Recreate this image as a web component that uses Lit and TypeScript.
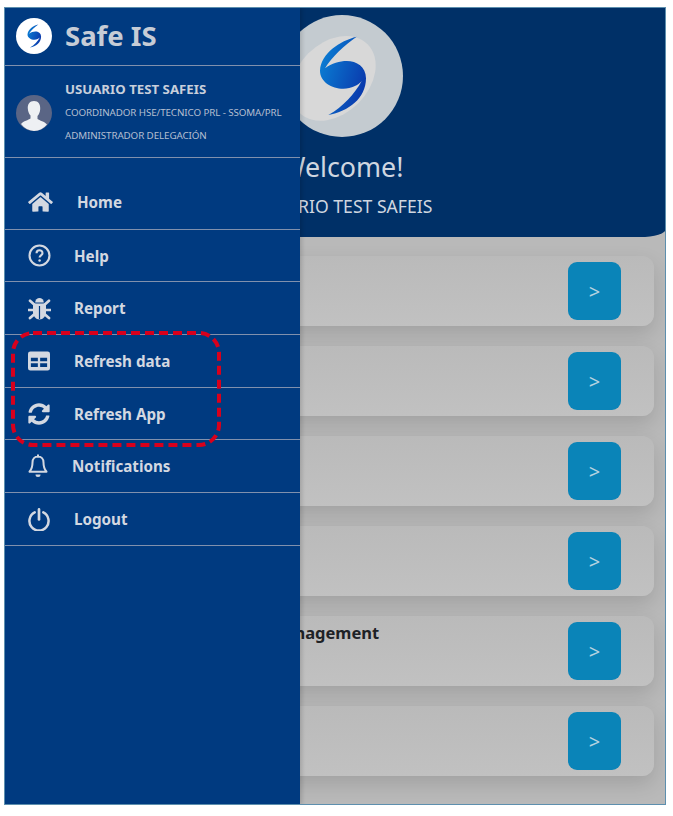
import { LitElement, html, css, svg } from "lit";
import { customElement } from "lit/decorators.js";

const S_PATH = "M200 110 C150 122 92 160 90 212 C90 245 125 266 160 266 C185 266 205 255 215 243 C195 280 160 320 115 345 C175 335 228 295 228 235 C228 200 200 183 170 183 C150 183 125 190 105 205 C125 170 165 135 200 110 Z";

const logo = (id: string, ring: string, inner: string) => html`<svg class="logo-svg" viewBox="-27 45 366 366">
  <defs><linearGradient id=${id} x1="0" y1="0" x2="1" y2="0.5"><stop offset="0" stop-color="#0a86d8"/><stop offset="1" stop-color="#0a3cae"/></linearGradient></defs>
  <circle cx="156" cy="228" r="183" fill=${ring}/>
  <ellipse cx="130" cy="235" rx="145" ry="106" fill=${inner} transform="rotate(-45 130 235)"/>
  <path d=${S_PATH} fill="url(#${id})"/>
</svg>`;

const icons: Record<string, unknown> = {
  home: svg`<svg class="ic" style="width:25px;height:22px" viewBox="0 0 576 512"><path d="M280.37 148.26L96 300.11V464a16 16 0 0 0 16 16l112.06-.29a16 16 0 0 0 15.92-16V368a16 16 0 0 1 16-16h64a16 16 0 0 1 16 16v95.64a16 16 0 0 0 16 16.05L464 480a16 16 0 0 0 16-16V300L295.67 148.26a12.19 12.19 0 0 0-15.3 0zM571.6 251.47L488 182.56V44.05a12 12 0 0 0-12-12h-56a12 12 0 0 0-12 12v72.61L318.47 43a48 48 0 0 0-61 0L4.34 251.47a12 12 0 0 0-1.6 16.9l25.5 31A12 12 0 0 0 45.15 301l235.22-193.74a12.19 12.19 0 0 1 15.3 0L530.9 301a12 12 0 0 0 16.9-1.6l25.5-31a12 12 0 0 0-1.7-16.93z"/></svg>`,
  help: svg`<svg class="ic" style="width:23px;height:23px" viewBox="0 0 24 24"><circle cx="12" cy="12" r="10.4" fill="none" stroke="currentColor" stroke-width="2.200"/><path d="M8.900 9.600a3.100 3.100 0 0 1 6.200 0c0 2.100-3 2.400-3 4.500" fill="none" stroke="currentColor" stroke-width="2.200"/><circle cx="12.100" cy="17.300" r="1.300"/></svg>`,
  bug: svg`<svg class="ic" style="width:23px;height:23px" viewBox="0 0 23 23"><path d="M7.200 5.400a4.300 4.300 0 0 1 8.600 0z"/><path d="M5.600 6.400h11.800l.6 2v6.600c0 4.200-2.900 7.500-6.500 7.500s-6.500-3.300-6.500-7.500V8.400z"/><path d="M11.500 9v13" stroke="#003a80" stroke-width="1.200"/><path d="M2 3.800l4.500 4M21 3.800l-4.500 4M.8 13h5M22.200 13h-5M2 21l4.600-4M21 21l-4.600-4" stroke="currentColor" stroke-width="2.700" stroke-linecap="round" fill="none"/></svg>`,
  table: svg`<svg class="ic" style="width:22px;height:20px" viewBox="0 0 23 20"><path fill-rule="evenodd" d="M2.500 0h18A2.500 2.500 0 0 1 23 2.500v15a2.500 2.500 0 0 1-2.500 2.500h-18A2.500 2.500 0 0 1 0 17.500v-15A2.500 2.500 0 0 1 2.500 0zM3 6.500v3.700h7.300V6.500zM12.700 6.500v3.700H20V6.500zM3 12.400v4h7.300v-4zM12.700 12.400v4H20v-4z"/></svg>`,
  sync: svg`<svg class="ic" style="width:22px;height:22px" viewBox="0 0 512 512"><path d="M370.72 133.28C339.458 104.008 298.888 87.962 255.848 88c-77.458.068-144.328 53.178-162.791 126.85-1.344 5.363-6.122 9.15-11.651 9.15H24.103c-7.498 0-13.194-6.807-11.807-14.176C33.933 94.924 134.813 8 256 8c66.448 0 126.791 26.136 171.315 68.685L463.03 40.97C478.149 25.851 504 36.559 504 57.941V192c0 13.255-10.745 24-24 24H345.941c-21.382 0-32.09-25.851-16.971-40.971l41.75-41.749zM32 296h134.059c21.382 0 32.09 25.851 16.971 40.971l-41.75 41.75c31.262 29.273 71.835 45.319 114.876 45.28 77.418-.07 144.315-53.144 162.787-126.849 1.344-5.363 6.122-9.15 11.651-9.15h57.304c7.498 0 13.194 6.807 11.807 14.176C478.067 417.076 377.187 504 256 504c-66.448 0-126.791-26.136-171.315-68.685L48.97 471.03C33.851 486.149 8 475.441 8 454.059V320c0-13.255 10.745-24 24-24z"/></svg>`,
  bell: svg`<svg class="ic" style="width:20px;height:24px" viewBox="0 0 20 24"><path d="M10 2.600c-3.300 0-5.500 2.500-5.500 5.800 0 4.500-1 7-3 9.300h17c-2-2.300-3-4.800-3-9.300 0-3.300-2.200-5.800-5.500-5.800z" fill="none" stroke="currentColor" stroke-width="2" stroke-linejoin="round"/><path d="M10 .5v2" stroke="currentColor" stroke-width="2"/><path d="M7.500 20.500h5a2.500 2.500 0 0 1-5 0z"/></svg>`,
  power: svg`<svg class="ic" style="width:22px;height:23px" viewBox="0 0 23 24"><path d="M7 4.600a10 10 0 1 0 9 0" fill="none" stroke="currentColor" stroke-width="2.600" stroke-linecap="round"/><path d="M11.500 1.500v10.500" stroke="currentColor" stroke-width="2.800" stroke-linecap="round"/></svg>`,
};

const menu = [
  { key: "home", label: "Home", cls: "first" },
  { key: "help", label: "Help", cls: "h52" },
  { key: "bug", label: "Report", cls: "h53" },
  { key: "table", label: "Refresh data", cls: "h53" },
  { key: "sync", label: "Refresh App", cls: "h52" },
  { key: "bell", label: "Notifications", cls: "h53 notif" },
  { key: "power", label: "Logout", cls: "h53" },
];

const cards = ["", "", "", "", "Management", ""];

@customElement("app-root")
export class AppRoot extends LitElement {
  static styles = css`
    :host { display: block; width: 673px; height: 816px; background: #fff; overflow: hidden;
      font-family: "Noto Sans", "Open Sans", sans-serif; }
    .frame { position: relative; width: 662px; height: 798px; margin: 7px 0 0 4px; overflow: hidden;
      background: #b9b9b9; }
    .edge { position: absolute; inset: 0; border: 1px solid #5d8fae; pointer-events: none; }
    .hero { height: 230px; box-sizing: border-box; padding: 8px 0 0 14px; background: #003067;
      border-bottom-right-radius: 26px 8px; display: flex; flex-direction: column; align-items: center; color: #cfd6e0; }
    .hero-logo { width: 122px; height: 122px; }
    .logo-svg { display: block; width: 100%; height: 100%; }
    .welcome { font-size: 26.800px; line-height: 36px; margin-top: 12px; }
    .who { font-size: 17.600px; line-height: 24px; margin-top: 9px; }
    .list { display: flex; flex-direction: column; gap: 20px; padding: 19px 12px 0 12px; }
    .card { height: 70px; flex: none; border-radius: 12px; background: linear-gradient(#bababa, #c1c1c1);
      box-shadow: 0 8px 20px rgba(0,0,0,.13); display: flex; justify-content: space-between; align-items: center; padding-right: 33px; }
    .title { align-self: flex-start; padding: 5px 0 0 253px; font-size: 16.500px; line-height: 24px; font-weight: 700; color: #1e2226; }
    .go { width: 53px; height: 58px; border-radius: 9px; background: #0a84b8; color: #b5d3e0; display: grid; place-items: center; font-size: 20px; }
    .drawer { position: absolute; left: 0; top: 0; bottom: 0; width: 296px; background: #003a80; color: #d3d8e1; box-shadow: 2px 0 4px rgba(0,0,0,.15); }
    .brand { height: 58px; display: flex; align-items: center; gap: 13px; padding-left: 12px; border-bottom: 1px solid #8090ad; }
    .brand-logo { width: 36px; height: 36px; flex: none; }
    .brand-name { font-size: 27.500px; font-weight: 700; color: #c6ccd6; line-height: 36px; }
    .user { height: 91px; display: flex; align-items: center; gap: 13px; padding-left: 12px; border-bottom: 1px solid #8090ad; }
    .avatar { width: 36px; height: 36px; flex: none; margin-top: 2px; }
    .user-lines { display: flex; flex-direction: column; padding-top: 2px; }
    .uname { font-size: 13.250px; font-weight: 700; line-height: 23px; color: #c8cfdb; }
    .role { font-size: 9.800px; line-height: 23px; color: #b5bfd0; white-space: nowrap; letter-spacing: -.1px; }
    .row { display: flex; align-items: center; border-bottom: 1px solid #8090ad; font-size: 15.200px; font-weight: 700; color: #d3d8e1; }
    .first { height: 72px; padding-top: 16px; box-sizing: border-box; }
    .h52 { height: 51px; }
    .h53 { height: 52px; }
    .slot { width: 70px; flex: none; display: flex; justify-content: flex-start; padding-left: 24px; box-sizing: border-box; }
    .first .slot { width: 73px; }
    .notif .slot { width: 68px; }
    .ic { display: block; fill: currentColor; color: #d3d8e1; }
    .mark { position: absolute; left: 7px; top: 324px; width: 210px; height: 116px; pointer-events: none; }
    .mark rect { fill: none; stroke: #d8001c; stroke-width: 4; stroke-dasharray: 9 5; }
  `;

  render() {
    return html`<div class="frame">
      <div class="hero">
        <div class="hero-logo">${logo("g1", "#c4cbd0", "#d8d8d8")}</div>
        <div class="welcome">Welcome!</div>
        <div class="who">USUARIO TEST SAFEIS</div>
      </div>
      <div class="list">
        ${cards.map((t) => html`<div class="card"><div class="title">${t}</div><div class="go">&gt;</div></div>`)}
      </div>
      <nav class="drawer">
        <div class="brand"><div class="brand-logo">${logo("g2", "#ffffff", "#ffffff")}</div><div class="brand-name">Safe IS</div></div>
        <div class="user">
          <svg class="avatar" viewBox="0 0 36 36"><circle cx="18" cy="18" r="18" fill="#5a6585"/><path d="M18 6c-4.500 0-6.500 3.500-6.200 7.500.2 3 1.200 5.500 2.700 7v3c-2 1.600-7 2.500-9.500 5.500A18 18 0 0 0 18 36a18 18 0 0 0 13-6.500c-2.500-3-7.500-3.900-9.500-5.500v-3c1.500-1.500 2.500-4 2.700-7C24.500 9.500 22.500 6 18 6z" fill="#eef0f3"/></svg>
          <div class="user-lines">
            <div class="uname">USUARIO TEST SAFEIS</div>
            <div class="role">COORDINADOR HSE/TECNICO PRL - SSOMA/PRL</div>
            <div class="role">ADMINISTRADOR DELEGACIÓN</div>
          </div>
        </div>
        ${menu.map((m) => html`<div class="row ${m.cls}"><div class="slot">${icons[m.key]}</div><span>${m.label}</span></div>`)}
      </nav>
      <svg class="mark" viewBox="0 0 210 116"><rect x="2" y="2" width="206" height="112" rx="20"/></svg>
      <div class="edge"></div>
    </div>`;
  }
}
